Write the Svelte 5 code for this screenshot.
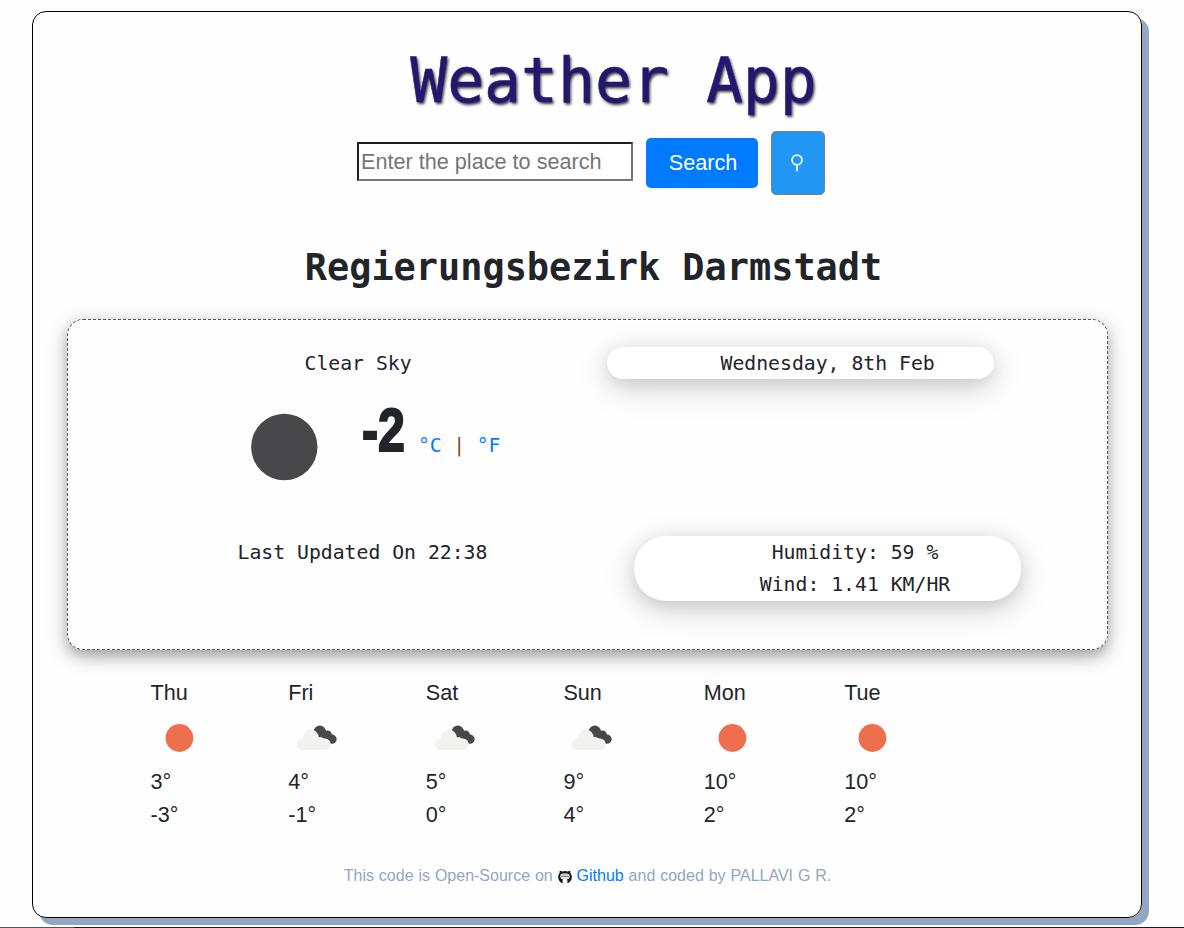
<script>
  const days = [
    { name: 'Thu', icon: 'sun', max: 3, min: -3 },
    { name: 'Fri', icon: 'clouds', max: 4, min: -1 },
    { name: 'Sat', icon: 'clouds', max: 5, min: 0 },
    { name: 'Sun', icon: 'clouds', max: 9, min: 4 },
    { name: 'Mon', icon: 'sun', max: 10, min: 2 },
    { name: 'Tue', icon: 'sun', max: 10, min: 2 }
  ];
</script>

<div class="page">
  <main class="app">
    <h1>Weather App</h1>
    <form class="search" onsubmit={(e) => e.preventDefault()}>
      <input type="text" placeholder="Enter the place to search" />
      <button class="submit" type="submit">Search</button>
      <button class="locate" type="button" aria-label="Current location">
        <svg width="14" height="20" viewBox="0 0 14 20" fill="none" stroke="#fff" stroke-width="1.7">
          <circle cx="7" cy="7" r="4.9" />
          <path d="M7 11.9V18.3" />
        </svg>
      </button>
    </form>

    <h2>Regierungsbezirk Darmstadt</h2>

    <section class="current">
      <div class="row top">
        <div class="sky">Clear Sky</div>
        <div class="pill date">Wednesday, 8th Feb</div>
      </div>
      <div class="row reading">
        <svg class="moon" width="68" height="68" viewBox="0 0 68 68"><circle cx="34.3" cy="34" r="33.2" fill="#48484a" /></svg>
        <strong><span>-2</span></strong>
        <div class="units"><a href="#c">°C</a> <i>|</i> <a href="#f">°F</a></div>
      </div>
      <div class="row bottom">
        <div class="updated">Last Updated On 22:38</div>
        <div class="pill facts">
          <div>Humidity: 59 %</div>
          <div>Wind: 1.41 KM/HR</div>
        </div>
      </div>
    </section>

    <section class="forecast">
      {#each days as day}
        <div class="day">
          <div>{day.name}</div>
          <svg width="56" height="56" viewBox="0 0 56 56">
            {#if day.icon === 'sun'}
              <circle cx="28.4" cy="28" r="13.9" fill="#ee6f4e" />
            {:else}
              <g fill="#48484a">
                <circle cx="31.8" cy="21.8" r="6.2" />
                <circle cx="39.6" cy="24.8" r="4.3" />
                <circle cx="44" cy="29.2" r="4.6" />
                <path d="M27 24l9-4 8 6-1 8-7-1-9-3z" />
              </g>
              <g fill="#f2f2f1">
                <circle cx="22.9" cy="27.4" r="7.8" />
                <circle cx="32" cy="32.6" r="5.6" />
                <circle cx="37.6" cy="35" r="5.1" />
                <rect x="8.8" y="28.5" width="34" height="11.6" rx="5.8" />
              </g>
            {/if}
          </svg>
          <div class="max">{day.max}°</div>
          <div>{day.min}°</div>
        </div>
      {/each}
    </section>

    <footer>
      This code is Open-Source on
      <svg width="14" height="14" viewBox="0 0 14 14">
        <path fill="#15191c" fill-rule="evenodd" d="M4.6 13.3C2 12.5.2 10.100.2 7.200.2 5.400.8 3.800 1.700 2.700 1.500 2 1.600 1.200 1.800.7c.9 0 1.700.3 2.400.7a9 9 0 0 1 5.600 0c.7-.4 1.500-.7 2.400-.7.2.5.3 1.300.1 2 .9 1.100 1.500 2.700 1.500 4.500 0 2.900-1.800 5.300-4.400 6.100v-3c0-.5-.1-.8-.4-1 1.800-.3 2.700-1.100 2.700-2.800 0-2.200-1.100-3-2.700-3H5c-1.600 0-2.700.8-2.700 3 0 1.700.9 2.500 2.700 2.800-.3.2-.4.5-.4 1z" />
        <path fill="#c4c7c9" d="M3.6 4h6.800v1.200H3.600zM3 7.600h8v1H3z" />
        <path fill="#8a8e91" d="M3 5.600h8v1.500H3z" />
      </svg>
      <a href="#github">Github</a> and coded by PALLAVI G R.
    </footer>
  </main>
  <div class="edge"><span></span></div>
</div>

<style>
  :global(body) { background: #fefefe; }
  * { box-sizing: border-box; }
  .page {
    height: 928px;
    overflow: hidden;
    display: flex;
    flex-direction: column;
    justify-content: space-between;
    font-family: 'Liberation Sans', Arial, sans-serif;
    font-size: 21.6px;
    color: #212529;
  }
  .app {
    width: 1110px;
    height: 907px;
    margin: 11px 0 0 32px;
    border: 1px solid #000;
    border-radius: 14px;
    box-shadow: 7px 7px 0 #94a6c0;
    padding: 0 33px 0 34px;
    display: flex;
    flex-direction: column;
  }
  h1, h2, .current { font-family: 'DejaVu Sans Mono', monospace; }
  h1 {
    margin: 32px 0 0;
    padding-left: 52px;
    text-align: center;
    font-size: 61.4px;
    line-height: 74px;
    font-weight: 400;
    color: #23186f;
    -webkit-text-stroke: 0.5px #23186f;
    text-shadow: 1.5px 1.5px 3px rgba(0, 0, 0, 0.8);
  }
  .search {
    display: flex;
    align-items: center;
    height: 64px;
    margin-top: 13px;
    padding-left: 290px;
  }
  input {
    width: 276px;
    height: 39px;
    padding: 0 2px;
    margin: 0 13px 3px 0;
    border: 2px solid;
    border-color: #211e20 #767676 #767676 #211e20;
    background: #fff;
    font: 21.65px 'Liberation Sans', Arial, sans-serif;
  }
  input::placeholder { color: #757575; opacity: 1; }
  button { padding: 0; color: #fff; border-radius: 5px; }
  .submit {
    width: 112px;
    height: 50px;
    margin-right: 13px;
    border: 0;
    padding: 0 0 1px 2px;
    background: #007bff;
    font: 21.6px 'Liberation Sans', Arial, sans-serif;
  }
  .locate {
    width: 54px;
    height: 64px;
    display: flex;
    align-items: center;
    justify-content: center;
    border: 1px solid #808080;
    background: #2196f3;
  }
  .locate svg { margin: -1px 0 0 -2px; }
  h2 {
    margin: 49px 0 0;
    padding-left: 12px;
    font-size: 36.9px;
    line-height: 48px;
    text-align: center;
  }
  .current {
    height: 331px;
    margin-top: 27px;
    padding-top: 27px;
    border: 1px dashed #555;
    border-radius: 16px;
    font-size: 19.77px;
    line-height: 32px;
    box-shadow: 0 6px 12px rgba(0, 0, 0, 0.2), 0 6px 22px rgba(0, 0, 0, 0.22);
  }
  .row { display: flex; align-items: flex-start; }
  .sky { width: 539px; padding: 1px 0 0 236.5px; }
  .pill {
    width: 387px;
    background: #fff;
    border-radius: 32px;
    box-shadow: 0 5px 18px rgba(0, 0, 0, 0.12), 0 8px 34px rgba(0, 0, 0, 0.15);
  }
  .date { height: 32px; padding: 1px 0 0 113.5px; }
  .reading { height: 156px; padding: 33px 0 0 182px; }
  .reading strong {
    width: 44px;
    margin: -15px 12px 0 44px;
    font: 700 62px/64px 'Liberation Sans', Arial, sans-serif;
  }
  .reading strong span {
    display: inline-block;
    transform: scaleX(0.78);
    transform-origin: left;
    -webkit-text-stroke: 2px #212529;
  }
  .units { padding-top: 17px; letter-spacing: -0.15px; }
  .units i { font-style: normal; color: #7d4b28; }
  a { color: #007bff; text-decoration: none; }
  .updated { width: 566px; padding: 1px 0 0 169.5px; }
  .facts { height: 65px; padding: 1px 0 0 55px; text-align: center; }
  .forecast {
    display: grid;
    grid-template-columns: 137.6px 137.6px 137.6px 140.4px 140.4px auto;
    margin: 26px 0 0 83.6px;
    line-height: 33px;
  }
  .day svg { display: block; margin-top: 1px; }
  .max { margin-top: -1px; }
  footer {
    margin-top: 33px;
    text-align: center;
    font-size: 16px;
    line-height: 24px;
    word-spacing: 0.45px;
    color: #94a6c0;
  }
  footer svg { vertical-align: -3px; }
  .edge { height: 1px; background: #1a1e22; }
  .edge span { display: block; width: 74px; height: 1px; background: #555; }
</style>
